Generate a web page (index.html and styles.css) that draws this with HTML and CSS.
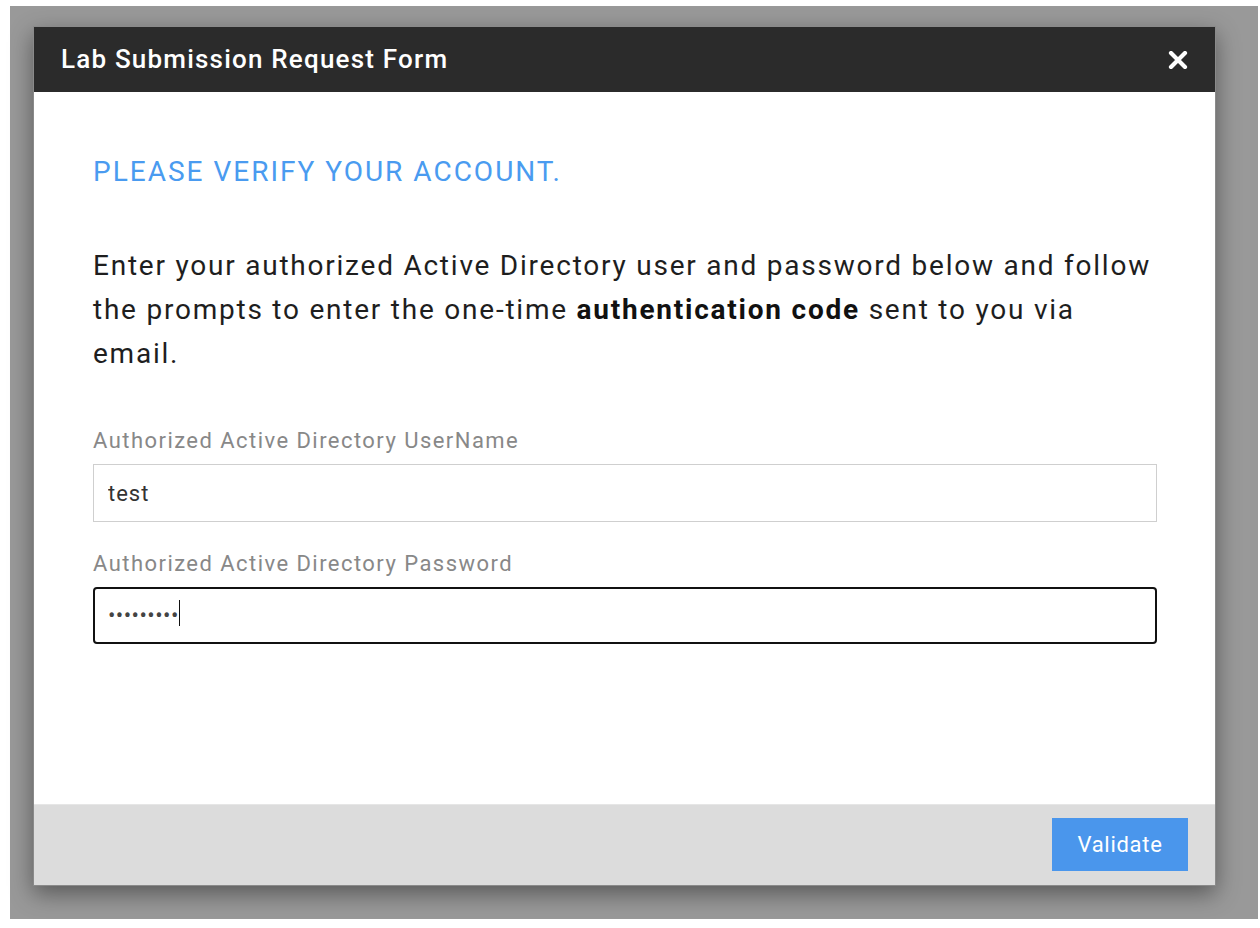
FILE: index.html
```html
<!DOCTYPE html>
<html lang="en">
<head>
<meta charset="utf-8">
<title>Lab Submission Request Form</title>
<link rel="stylesheet" href="styles.css">
</head>
<body>
<div class="backdrop">
  <div class="modal">
    <div class="modal-header">
      <span class="modal-title">Lab Submission Request Form</span>
      <span class="close" aria-label="Close">
        <svg width="20" height="18" viewBox="0 0 20 18"><path d="M3 2 L17 16 M17 2 L3 16" stroke="#fff" stroke-width="4.2" stroke-linecap="round"/></svg>
      </span>
    </div>
    <div class="modal-body">
      <h2 class="verify">PLEASE VERIFY YOUR ACCOUNT.</h2>
      <p class="intro">Enter your authorized Active Directory user and password below and follow the prompts to enter the one-time <b>authentication code</b> sent to you via<br>email.</p>
      <label class="field-label" for="user">Authorized Active Directory UserName</label>
      <input class="field" id="user" type="text" value="test">
      <label class="field-label second" for="pass">Authorized Active Directory Password</label>
      <div class="field-wrap">
        <input class="field focused" id="pass" type="password" value="123456789">
        <span class="caret"></span>
      </div>
    </div>
    <div class="modal-footer">
      <button class="btn-validate" type="button">Validate</button>
    </div>
  </div>
</div>
</body>
</html>
```
FILE: styles.css
```css
html, body {
  margin: 0;
  padding: 0;
  background: #ffffff;
}
body {
  font-family: Roboto, "Liberation Sans", Arial, sans-serif;
}
.backdrop {
  margin: 6px 2px 0 10px;
  height: 913px;
  background: #999999;
  padding: 20px 0 0 23px;
  box-sizing: border-box;
}
.modal {
  width: 1183px;
  height: 860px;
  box-sizing: border-box;
  border: 1px solid #8a8a8a;
  background: #ffffff;
  display: flex;
  flex-direction: column;
  box-shadow: 0 8px 22px rgba(0, 0, 0, 0.42);
}
.modal-header {
  height: 65px;
  flex: none;
  background: #2b2b2b;
  display: flex;
  align-items: center;
  justify-content: space-between;
  padding: 0 27px 0 27px;
  box-sizing: border-box;
}
.modal-title {
  color: #ffffff;
  font-size: 26px;
  font-weight: 500;
  line-height: 30px;
  letter-spacing: 1.2px;
  margin-top: -1px;
}
.close {
  display: flex;
  width: 20px;
  height: 18px;
}
.modal-body {
  flex: 1;
  padding: 63px 59px 0 59px;
}
.verify {
  margin: 0;
  font-size: 28px;
  line-height: 34px;
  font-weight: 400;
  color: #4a9bf0;
  letter-spacing: 2px;
}
.intro {
  margin: 55px 0 0 0;
  font-size: 28px;
  line-height: 44px;
  color: #1e1e1e;
  letter-spacing: 1.77px;
}
.intro b {
  font-weight: 700;
  color: #111111;
}
.field-label {
  display: block;
  margin-top: 50px;
  font-size: 22px;
  line-height: 30px;
  color: #888888;
  letter-spacing: 1.45px;
}
.field-label.second {
  margin-top: 27px;
}
.field {
  display: block;
  margin-top: 8px;
  width: 1064px;
  height: 58px;
  box-sizing: border-box;
  border: 1px solid #cfcfcf;
  padding: 0 14px;
  font-family: Roboto, "Liberation Sans", Arial, sans-serif;
  font-size: 22px;
  letter-spacing: 1px;
  color: #333333;
  background: #ffffff;
  outline: none;
}
.field-wrap {
  position: relative;
  margin-top: 8px;
  width: 1064px;
}
.field-wrap .field {
  margin-top: 0;
}
.field.focused {
  border: 2px solid #111111;
  border-radius: 4px;
  padding: 0 13px;
  height: 57px;
  color: #444444;
  letter-spacing: 0.45px;
}
.caret {
  position: absolute;
  left: 86px;
  top: 13px;
  width: 1px;
  height: 26px;
  background: #111111;
}
.modal-footer {
  height: 81px;
  flex: none;
  box-sizing: border-box;
  background: #dcdcdc;
  border-top: 1px solid #e6e6e6;
  display: flex;
  justify-content: flex-end;
  align-items: flex-start;
  padding: 13px 27px 0 0;
}
.btn-validate {
  width: 136px;
  height: 53px;
  border: none;
  background: #4a96ec;
  color: #ffffff;
  font-family: Roboto, "Liberation Sans", Arial, sans-serif;
  font-size: 22px;
  letter-spacing: 0.7px;
  padding: 0;
  cursor: pointer;
}
```
